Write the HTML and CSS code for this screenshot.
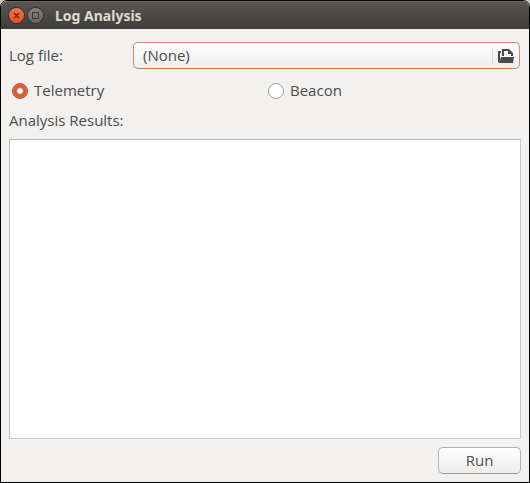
FILE: index.html
```html
<!DOCTYPE html>
<html lang="en">
<head>
<meta charset="utf-8">
<title>Log Analysis</title>
<link rel="stylesheet" href="styles.css">
</head>
<body>
<main class="window">
  <header class="titlebar">
    <button class="win-btn close" type="button" aria-label="Close">
      <svg viewBox="0 0 15 15" width="15" height="15"><path d="M5 5l5 5M10 5l-5 5" fill="none" stroke="#5c2413" stroke-width="1.2"/></svg>
    </button>
    <button class="win-btn maximize" type="button" aria-label="Maximize">
      <svg viewBox="0 0 15 15" width="15" height="15"><rect x="4.5" y="4.5" width="6" height="6" fill="none" stroke="#3b3a36"/></svg>
    </button>
    <h1 class="title">Log Analysis</h1>
  </header>
  <form class="content">
    <div class="file-row">
      <label for="log-file">Log file:</label>
      <button class="file-button" id="log-file" type="button">
        <span class="file-name">(None)</span>
        <span class="file-icon">
          <svg viewBox="0 0 16 16" width="16" height="16" fill="#4a4a4a"><path d="M0 14V3h3v2H2v6l-.5 4H1z"/><path d="M4 8V1h7l4 4v3h-2V6h-3V3H6v5z"/><path d="M3 9h13l-1 6H1z"/></svg>
        </span>
      </button>
    </div>
    <div class="mode-row">
      <label class="option"><input class="radio" type="radio" name="mode" checked>Telemetry</label>
      <label class="option"><input class="radio" type="radio" name="mode">Beacon</label>
    </div>
    <label class="results-label" for="results">Analysis Results:</label>
    <textarea class="results" id="results"></textarea>
    <div class="actions">
      <button class="run-button" type="button">Run</button>
    </div>
  </form>
</main>
</body>
</html>
```
FILE: styles.css
```css
* {
  box-sizing: border-box;
}

body {
  margin: 0;
  background: #c9c6c4;
  color: #4c4c4c;
  font: 15px/18px "Open Sans", "Noto Sans", sans-serif;
}

button {
  margin: 0;
  padding: 0;
  color: inherit;
  font: inherit;
}

.window {
  display: flex;
  flex-direction: column;
  min-height: 100vh;
  border: 1px solid #000;
  border-radius: 7px 7px 0 0;
  background: #f2f1f0;
  overflow: hidden;
}

.titlebar {
  display: flex;
  align-items: center;
  gap: 4px;
  height: 28px;
  padding: 0 8px;
  background: linear-gradient(#59564e, #3e3d39);
  border-top: 1px solid #69665d;
}

.win-btn {
  display: flex;
  width: 15px;
  height: 15px;
  border: 0;
  border-radius: 50%;
  box-shadow: 0 0 0 1px #34332f;
}

.close {
  background: linear-gradient(#f4754e, #e2501f);
}

.maximize {
  background: linear-gradient(#86847d, #65635d);
}

.title {
  margin: 0 0 0 8px;
  color: #dfdbd2;
  font: 700 14px/20px "Noto Sans", "Open Sans", sans-serif;
}

.content {
  display: flex;
  flex: 1;
  flex-direction: column;
  padding: 13px 8px 8px;
}

.file-row {
  display: grid;
  grid-template-columns: 124px 1fr;
  align-items: center;
  padding-right: 1px;
}

.file-row label,
.file-name,
.run-button {
  padding-bottom: 2px;
}

.file-button {
  display: flex;
  align-items: center;
  height: 27px;
  padding: 0 5px 0 9px;
  border: 1px solid #d98a6d;
  border-bottom-color: #cf6f4b;
  border-radius: 5px;
  background: linear-gradient(#fefefe, #eeedec);
}

.file-name {
  flex: 1;
  text-align: left;
}

.file-icon {
  display: flex;
  padding-left: 5px;
  border-left: 1px solid #dcdad8;
}

.mode-row {
  display: grid;
  grid-template-columns: 1fr 1fr;
  margin-top: 12px;
}

.option {
  display: flex;
  align-items: flex-end;
  gap: 6px;
  padding-left: 3px;
}

.radio {
  width: 16px;
  height: 16px;
  margin: 0;
  appearance: none;
  border: 1px solid #a09e9c;
  border-radius: 50%;
  background: #fff;
}

.radio:checked {
  border-color: #b54f2b;
  background: radial-gradient(circle, #fff 2px, #cf4f20 4px, #e27449 7px);
}

.results-label {
  margin: 12px 0 10px;
}

.results {
  flex: 1;
  min-height: 80px;
  border: 1px solid #bcb9b6;
  border-right-color: #cbc9c7;
  border-bottom-color: #cbc9c7;
  border-radius: 0;
  background: #fff;
  color: inherit;
  font: inherit;
  resize: none;
}

.actions {
  display: flex;
  justify-content: flex-end;
  margin-top: 8px;
}

.run-button {
  width: 83px;
  height: 27px;
  border: 1px solid #b4b2b0;
  border-bottom-color: #9c9a98;
  border-radius: 5px;
  background: linear-gradient(#fefefe, #eeedec);
}
```
